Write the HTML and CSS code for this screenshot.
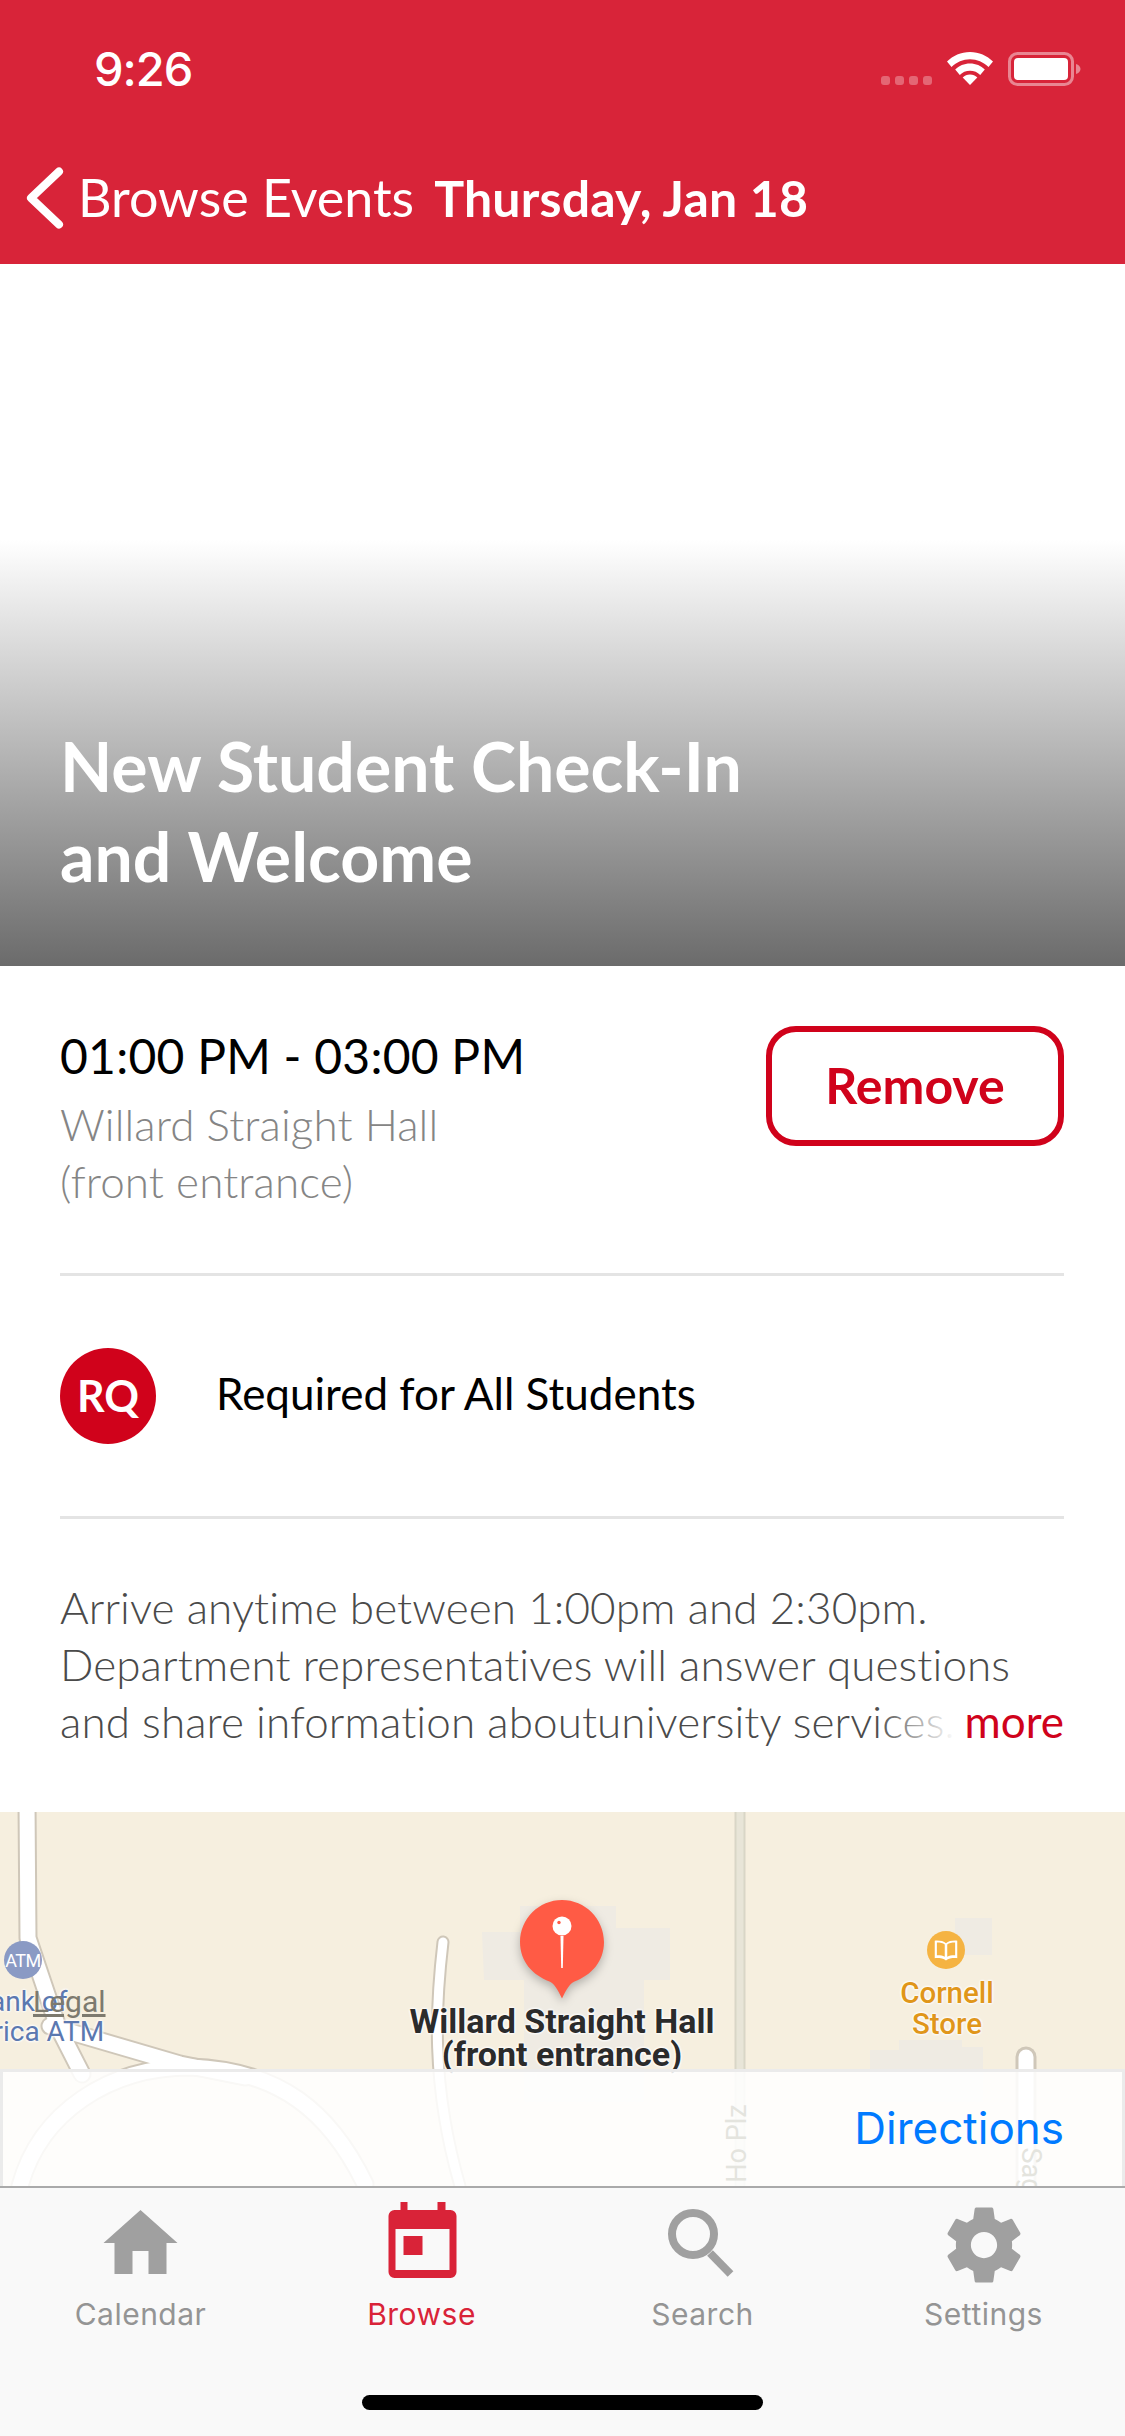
FILE: index.html
```html
<!DOCTYPE html>
<html lang="en">
<head>
<meta charset="utf-8">
<title>New Student Check-In and Welcome</title>
<link rel="stylesheet" href="styles.css">
</head>
<body>
<div class="screen">
  <header class="header">
    <div class="status">
      <span class="clock">9:26</span>
      <div class="status-icons">
        <span class="signal"><i></i><i></i><i></i><i></i></span>
        <svg class="wifi" viewBox="0 0 46 33" width="46" height="33"><path d="M23 0C14 0 6 3.600 0 9.500l4.500 5.500C9.500 10 16 7.200 23 7.200S36.500 10 41.500 15L46 9.500C40 3.600 32 0 23 0z" fill="#fff"/><path d="M23 11.500c-5.800 0-11 2.300-14.800 6l4.600 5.400c2.600-2.500 6.200-4.100 10.200-4.100s7.600 1.600 10.200 4.100l4.600-5.400c-3.800-3.700-9-6-14.800-6z" fill="#fff"/><path d="M23 22.500c-2.900 0-5.400 1.100-7.300 2.900L23 33l7.300-7.600c-1.900-1.800-4.400-2.900-7.300-2.900z" fill="#fff"/></svg>
        <svg class="battery" viewBox="0 0 73 34" width="73" height="34"><rect x="1.500" y="1.500" width="63" height="31" rx="8" fill="none" stroke="#fff" stroke-opacity=".45" stroke-width="3"/><rect x="6" y="6" width="54" height="22" rx="4" fill="#fff"/><path d="M68 12c2.800.8 4.500 2.800 4.500 5s-1.700 4.200-4.500 5z" fill="#fff" fill-opacity=".45"/></svg>
      </div>
    </div>
    <nav class="navbar">
      <svg class="chevron" viewBox="0 0 38 62" width="38" height="62"><path d="M33 4.500 5 31l28 26.500" fill="none" stroke="#fff" stroke-width="8" stroke-linecap="round" stroke-linejoin="round"/></svg>
      <span class="back-label">Browse Events</span>
      <span class="nav-title">Thursday, Jan 18</span>
    </nav>
  </header>

  <section class="hero">
    <h1 class="hero-title">New Student Check-In<br>and Welcome</h1>
  </section>

  <section class="info">
    <div class="info-text">
      <div class="time">01:00 PM - 03:00 PM</div>
      <div class="place">Willard Straight Hall<br>(front entrance)</div>
    </div>
    <button class="remove">Remove</button>
  </section>

  <section class="tag-row">
    <span class="tag-badge">RQ</span>
    <span class="tag-label">Required for All Students</span>
  </section>

  <section class="desc">
    <p>Arrive anytime between 1:00pm and 2:30pm.<br>Department representatives will answer questions<br>and share information aboutuniversity services.</p>
    <span class="more">more</span>
  </section>

  <section class="map">
    <svg class="map-art" viewBox="0 0 1125 374" width="1125" height="374">
      <g fill="#efebe3">
        <path d="M482 120H520V94H616V116H670V168H644V290H524V168H484z"/>
        <path d="M955 106h37v37h-37z"/>
        <path d="M870 238H899V228H962V235H983V290H870z"/>
      </g>
      <path d="M740 0v374" stroke="#d9d6c7" stroke-width="11"/>
      <path d="M740 0v374" stroke="#e8e5d8" stroke-width="7"/>
      <g fill="none" stroke-linecap="round" stroke-linejoin="round">
        <g stroke="#cfc7b9" stroke-width="19">
          <path d="M27 -10 28 126 58 215 82 262"/>
          <path d="M50 214 180 252 245 265"/>
          <path d="M20 374C40 300 110 255 190 255 280 258 330 300 365 372"/>
        </g>
        <g stroke="#cfc7b9" stroke-width="13">
          <path d="M443 130C436 190 430 270 460 374"/>
        </g>
        <g stroke="#cfc7b9" stroke-width="21">
          <path d="M1026 245V374"/>
        </g>
        <g stroke="#fff" stroke-width="15">
          <path d="M27 -10 28 126 58 215 82 262"/>
          <path d="M50 214 180 252 245 265"/>
          <path d="M20 374C40 300 110 255 190 255 280 258 330 300 365 372"/>
          <path d="M1026 245V374"/>
        </g>
        <g stroke="#fff" stroke-width="9">
          <path d="M443 130C436 190 430 270 460 374"/>
        </g>
      </g>
    </svg>
    <span class="atm">ATM</span>
    <span class="map-label bank">Bank of<br>America ATM</span>
    <span class="legal">Legal</span>
    <svg class="pin" viewBox="0 0 100 114" width="100" height="114">
      <path d="M50 4C26.800 4 8 22.800 8 46c0 19.500 12.500 33 29.500 39.500 5 2 8 8 12.500 17 4.500-9 7.500-15 12.500-17C79.500 79 92 65.500 92 46 92 22.800 73.200 4 50 4z" fill="#ff5b45"/>
      <circle cx="50" cy="30" r="9.500" fill="#fff"/>
      <path d="M48.500 40h3l-.7 32h-1.600z" fill="#fff"/>
      <circle cx="47" cy="26.500" r="1.700" fill="#ff5b45"/>
    </svg>
    <span class="map-label venue">Willard Straight Hall<br>(front entrance)</span>
    <span class="store-dot">
      <svg viewBox="0 0 24 24" width="30" height="30"><path d="M12 6.500C10 4.800 7 4.300 3 4.500v14c3.500-.2 7 .2 9 1.800 2-1.600 5.500-2 9-1.800v-14C17 4.300 14 4.800 12 6.500zM11 17.300c-1.800-.9-4-1.200-6.300-1.100V6C7.500 6 9.700 6.400 11 7.500zm8.300-1.100c-2.300-.1-4.500.2-6.300 1.100V7.500C14.300 6.400 16.500 6 19.300 6z" fill="#fff"/></svg>
    </span>
    <span class="map-label store">Cornell<br>Store</span>
    <div class="map-panel">
      <span class="street ho">Ho Plz</span>
      <span class="street sag">Sag</span>
      <span class="directions">Directions</span>
    </div>
  </section>

  <footer class="tabbar">
    <div class="tabs">
      <div class="tab">
        <svg viewBox="0 0 90 90" width="90" height="90"><path d="M44.500 10 7.500 43h11v31H36.500V51h16v23h18V43h11z" fill="#a0a0a0"/></svg>
        <span>Calendar</span>
      </div>
      <div class="tab active">
        <svg viewBox="0 0 90 90" width="90" height="90"><path fill="#d92338" fill-rule="evenodd" d="M23.500 2h7v8h30V2h8v8h5a6 6 0 0 1 6 6v56a6 6 0 0 1-6 6h-56a6 6 0 0 1-6-6V16a6 6 0 0 1 6-6h6zM18.500 29v41h54V29zM26.500 36h19v19h-19z"/></svg>
        <span>Browse</span>
      </div>
      <div class="tab">
        <svg viewBox="0 0 90 90" width="90" height="90"><circle cx="35" cy="34" r="21" fill="none" stroke="#a0a0a0" stroke-width="8"/><path d="M52 53 72.500 74" stroke="#a0a0a0" stroke-width="8" fill="none"/></svg>
        <span>Search</span>
      </div>
      <div class="tab">
        <svg viewBox="0 0 24 24" width="90" height="90"><path fill="#a0a0a0" d="M19.430 12.980c.04-.32.07-.64.07-.98s-.03-.66-.07-.98l2.110-1.650c.19-.15.24-.42.12-.64l-2-3.460c-.12-.22-.39-.3-.61-.22l-2.490 1c-.52-.4-1.080-.73-1.690-.98l-.38-2.650C14.460 2.180 14.250 2 14 2h-4c-.25 0-.46.18-.49.42l-.38 2.650c-.61.25-1.170.59-1.690.98l-2.490-1c-.23-.09-.49 0-.61.22l-2 3.460c-.13.22-.07.49.12.64l2.110 1.650c-.04.32-.07.65-.07.98s.03.66.07.98l-2.110 1.650c-.19.15-.24.42-.12.64l2 3.460c.12.22.39.3.61.22l2.490-1c.52.4 1.080.73 1.690.98l.38 2.650c.03.24.24.42.49.42h4c.25 0 .46-.18.49-.42l.38-2.650c.61-.25 1.170-.59 1.690-.98l2.490 1c.23.09.49 0 .61-.22l2-3.460c.12-.22.07-.49-.12-.64l-2.110-1.650zM12 15.500c-1.930 0-3.500-1.570-3.500-3.500s1.570-3.500 3.500-3.500 3.500 1.570 3.500 3.500-1.570 3.500-3.500 3.500z"/></svg>
        <span>Settings</span>
      </div>
    </div>
    <div class="home-bar"></div>
  </footer>
</div>
</body>
</html>
```
FILE: styles.css
```css
* { box-sizing: border-box; }
html, body { margin: 0; padding: 0; }
body { background: #fff; font-family: "Lato", "Liberation Sans", sans-serif; }
.screen { width: 1125px; height: 2436px; display: flex; flex-direction: column; overflow: hidden; }

.header { height: 264px; background: #d82439; color: #fff; display: flex; flex-direction: column; }
.status { height: 130px; display: flex; justify-content: space-between; align-items: flex-start; padding: 47px 44px 0 94px; }
.clock { font-family: "Inter", sans-serif; font-weight: 500; font-size: 47px; line-height: 44px; letter-spacing: -1px; }
.status-icons { display: flex; align-items: flex-start; padding-top: 5px; }
.signal { display: flex; gap: 5px; margin-top: 24px; margin-right: 15px; }
.signal i { width: 9px; height: 9px; border-radius: 3px; background: rgba(255,255,255,.3); }
.wifi { margin-right: 15px; }
.navbar { display: flex; align-items: baseline; height: 134px; padding-left: 26px; position: relative; }
.chevron { position: absolute; left: 26px; top: 37px; }
.back-label { margin-left: 52px; font-size: 52px; line-height: 134px; }
.nav-title { margin-left: 20px; font-size: 50px; font-weight: 700; line-height: 134px; letter-spacing: .2px; }

.hero { height: 702px; padding: 0 60px; display: flex; align-items: flex-end; background: linear-gradient(to bottom, #fff 0, #fff 276px, #6b6b6b 100%); }
.hero-title { margin: 0 0 65px; color: #fff; font-size: 68px; font-weight: 700; line-height: 90px; }

.info { height: 310px; border-bottom: 3px solid #e4e4e4; margin: 0 61px 0 60px; display: flex; justify-content: space-between; align-items: flex-start; padding-top: 60px; }
.time { font-size: 48px; line-height: 60px; color: #000; letter-spacing: .25px; }
.place { margin-top: 10px; font-size: 44px; line-height: 57px; color: #858585; font-weight: 300; letter-spacing: .1px; }
.remove { width: 298px; height: 120px; border: 6px solid #d0021b; border-radius: 30px; background: #fff; color: #d0021b; font: 700 50px "Lato", sans-serif; padding: 0 0 3px; }

.tag-row { height: 243px; margin: 0 61px 0 60px; border-bottom: 3px solid #e4e4e4; display: flex; align-items: center; gap: 60px; }
.tag-badge { width: 96px; height: 96px; border-radius: 50%; background: #d0021b; color: #fff; font-weight: 700; font-size: 43px; padding-bottom: 2px; display: flex; align-items: center; justify-content: center; }
.tag-label { font-size: 44px; padding-bottom: 6px; color: #000; }

.desc { height: 293px; padding: 60px 61px 0 60px; position: relative; }
.desc p { margin: 0; font-size: 44px; font-weight: 300; line-height: 57px; color: #4a4a4a; white-space: nowrap; letter-spacing: .1px; }
.more { position: absolute; right: 61px; bottom: 62px; padding-left: 90px; font-size: 44px; line-height: 57px; color: #d0021b; background: linear-gradient(to right, rgba(255,255,255,0), #fff 80px); }

.map { height: 374px; position: relative; background: #f6efdf; overflow: hidden; font-family: "Roboto", sans-serif; }
.map-art { position: absolute; left: 0; top: 0; }
.map-label { position: absolute; text-align: center; white-space: nowrap; text-shadow: 0 0 3px #fff, 0 0 3px #fff, 0 0 3px #fff; }
.atm { position: absolute; left: 4px; top: 129px; width: 38px; height: 38px; border-radius: 50%; background: #8a9ac4; color: #fff; font-size: 18px; letter-spacing: -.5px; display: flex; align-items: center; justify-content: center; }
.bank { left: -80px; width: 200px; top: 175px; font-size: 28px; line-height: 30px; color: #5b78b0; }
.legal { position: absolute; left: 33px; top: 174px; font-size: 30px; line-height: 32px; color: #7d7a6f; text-decoration: underline; }
.pin { position: absolute; left: 512px; top: 84px; filter: drop-shadow(0 4px 5px rgba(0,0,0,.25)); }
.venue { left: 362px; width: 400px; top: 193px; font-size: 34px; font-weight: 700; line-height: 33px; color: #2b2b2b; }
.store-dot { position: absolute; left: 927px; top: 119px; width: 38px; height: 38px; border-radius: 50%; background: #f5b342; display: flex; align-items: center; justify-content: center; }
.store { left: 847px; width: 200px; top: 166px; font-size: 29.500px; line-height: 31px; color: #e0961a; font-weight: 500; }

.map-panel { position: absolute; left: 0; right: 0; bottom: 0; height: 117px; background: rgba(255,255,255,.87); border: 3px solid rgba(233,233,233,.9); border-bottom: 0; display: flex; justify-content: flex-end; align-items: center; padding: 0 58px 2px 0; }
.street { position: absolute; color: #e4e4de; font-size: 27px; line-height: 27px; transform: rotate(-90deg); white-space: nowrap; }
.ho { left: 695px; top: 58px; }
.sag { left: 1005px; top: 85px; transform: rotate(90deg); }
.directions { position: relative; font-family: "Inter", sans-serif; font-size: 44px; color: #007aff; }

.tabbar { flex: 1; background: #f9f9f9; border-top: 2px solid #aaa; display: flex; flex-direction: column; }
.tabs { display: grid; grid-template-columns: repeat(4, 281px); }
.tab { display: flex; flex-direction: column; align-items: center; padding-top: 12px; color: #949494; font-family: "Inter", sans-serif; font-size: 30px; letter-spacing: .5px; }
.tab span { margin-top: 4px; line-height: 40px; }
.tab.active { color: #d92338; }
.home-bar { width: 401px; height: 15px; margin: 61px auto 0; border-radius: 8px; background: #000; }
```
